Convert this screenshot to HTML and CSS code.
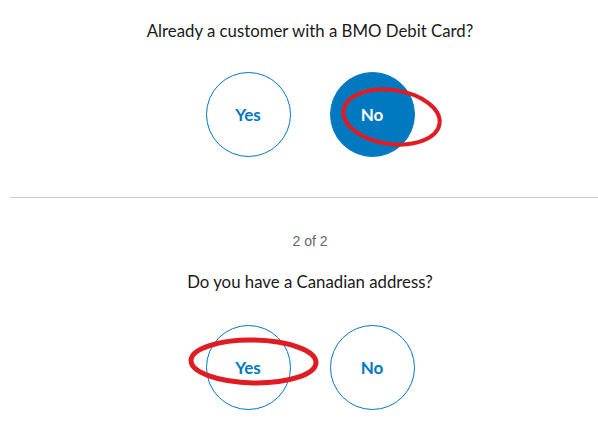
FILE: index.html
```html
<!DOCTYPE html>
<html>
<head>
<meta charset="utf-8">
<link rel="stylesheet" href="styles.css">
</head>
<body>
<div class="page">
  <section class="step step-first">
    <h2 class="question">Already a customer with a BMO Debit Card?</h2>
    <div class="choices">
      <button class="choice">Yes</button>
      <button class="choice is-selected">No</button>
    </div>
  </section>
  <hr class="divider">
  <section class="step step-second">
    <div class="counter">2 of 2</div>
    <h2 class="question">Do you have a Canadian address?</h2>
    <div class="choices">
      <button class="choice">Yes</button>
      <button class="choice">No</button>
    </div>
  </section>
</div>
<svg class="marks" width="598" height="429" viewBox="0 0 598 429">
  <ellipse cx="391.5" cy="117" rx="48.5" ry="27" transform="rotate(8 391.5 117)" fill="none" stroke="#e11b22" stroke-width="4"/>
  <ellipse cx="253.5" cy="361.5" rx="62.5" ry="21.5" transform="rotate(1 253.5 361.5)" fill="none" stroke="#e11b22" stroke-width="5"/>
</svg>
</body>
</html>
```
FILE: styles.css
```css
html, body {
  margin: 0;
  padding: 0;
  background: #ffffff;
  overflow: hidden;
}
body {
  width: 598px;
  height: 429px;
  position: relative;
  font-family: Lato, "Open Sans", sans-serif;
}
.page {
  margin-left: 10px;
  width: 600px;
  display: flex;
  flex-direction: column;
  align-items: stretch;
}
.step {
  display: flex;
  flex-direction: column;
  align-items: center;
}
.step-first {
  padding-top: 19px;
}
.question {
  margin: 0;
  font-size: 16.8px;
  line-height: 24px;
  font-weight: 400;
  color: #1a1a1a;
}
.choices {
  display: flex;
  gap: 39px;
  margin-top: 29px;
}
.step-second .choices {
  margin-top: 31px;
}
.choice {
  width: 85px;
  height: 85px;
  border-radius: 50%;
  border: 1px solid #0079c1;
  background: #ffffff;
  color: #0079c1;
  font-family: Lato, sans-serif;
  font-weight: 700;
  font-size: 17px;
  padding: 0;
  display: flex;
  align-items: center;
  justify-content: center;
}
.choice.is-selected {
  background: #0079c1;
  color: #ffffff;
}
.divider {
  margin: 40px 0 0 0;
  border: 0;
  border-top: 1px solid #cccccc;
  height: 0;
}
.counter {
  margin-top: 34px;
  font-family: "Liberation Sans", Arial, sans-serif;
  font-size: 14px;
  line-height: 18px;
  color: #666666;
}
.step-second .question {
  margin-top: 20px;
}
.marks {
  position: absolute;
  left: 0;
  top: 0;
  pointer-events: none;
}
```
